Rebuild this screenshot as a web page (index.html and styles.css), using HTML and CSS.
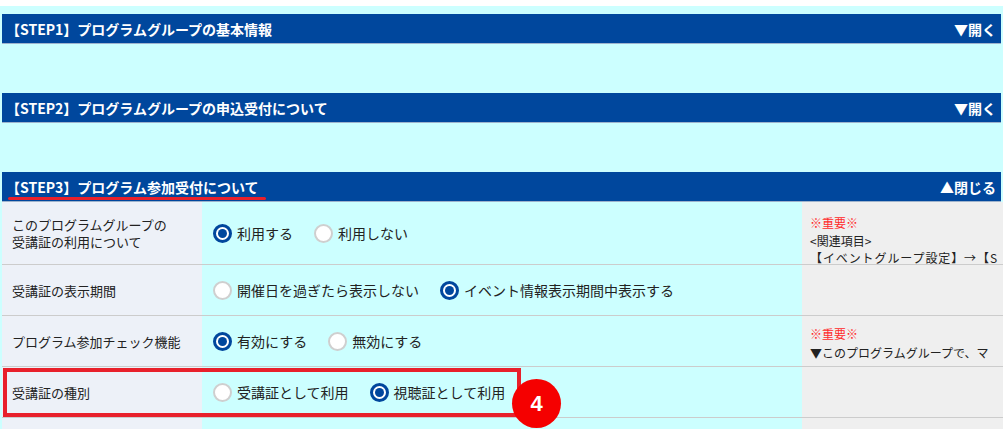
FILE: index.html
```html
<!DOCTYPE html>
<html lang="ja">
<head>
<meta charset="utf-8">
<title>プログラムグループ設定</title>
<link rel="stylesheet" href="styles.css">
</head>
<body>
<div class="page">
  <section class="step">
    <div class="step-head">
      <span class="step-title">【STEP1】プログラムグループの基本情報</span>
      <span class="step-toggle">▼開く</span>
    </div>
  </section>

  <section class="step">
    <div class="step-head">
      <span class="step-title">【STEP2】プログラムグループの申込受付について</span>
      <span class="step-toggle">▼開く</span>
    </div>
  </section>

  <section class="step">
    <div class="step-head">
      <span class="step-title">【STEP3】プログラム参加受付について</span>
      <span class="step-toggle">▲閉じる</span>
      <span class="mark-line"></span>
    </div>
    <div class="form-grid">
      <div class="cell label">このプログラムグループの<br>受講証の利用について</div>
      <div class="cell field">
        <label class="opt"><span class="radio on"></span>利用する</label>
        <label class="opt"><span class="radio"></span>利用しない</label>
      </div>
      <div class="cell note note-top">
        <div class="warn">※重要※</div>
        <div>&lt;関連項目&gt;</div>
        <div class="wide">【イベントグループ設定】→【S</div>
      </div>

      <div class="cell label">受講証の表示期間</div>
      <div class="cell field">
        <label class="opt"><span class="radio"></span>開催日を過ぎたら表示しない</label>
        <label class="opt"><span class="radio on"></span>イベント情報表示期間中表示する</label>
      </div>
      <div class="cell note"></div>

      <div class="cell label">プログラム参加チェック機能</div>
      <div class="cell field">
        <label class="opt"><span class="radio on"></span>有効にする</label>
        <label class="opt"><span class="radio"></span>無効にする</label>
      </div>
      <div class="cell note note-mid">
        <div class="warn">※重要※</div>
        <div>▼このプログラムグループで、マ</div>
      </div>

      <div class="cell label">受講証の種別</div>
      <div class="cell field">
        <label class="opt"><span class="radio"></span>受講証として利用</label>
        <label class="opt"><span class="radio on"></span>視聴証として利用</label>
      </div>
      <div class="cell note"></div>

      <div class="cell label last"></div>
      <div class="cell field last"></div>
      <div class="cell note last"></div>

      <div class="focus-box"></div>
      <div class="badge">4</div>
    </div>
  </section>
</div>
</body>
</html>
```

FILE: styles.css
```css
html, body {
  margin: 0;
  padding: 0;
  background: #ffffff;
  overflow: hidden;
}

body {
  font-family: "Noto Sans CJK JP", "Noto Sans", sans-serif;
  color: #333333;
}

.page {
  margin-top: 6px;
  min-height: 423px;
  background: #ccffff;
  padding: 8px 2px 0;
  box-sizing: border-box;
}

.step + .step {
  margin-top: 49px;
}

.step-head {
  position: relative;
  display: flex;
  justify-content: space-between;
  align-items: center;
  height: 29px;
  padding: 0 5px 0 4px;
  background: #00479d;
  border-bottom: 1px solid #9fb3cc;
  color: #ffffff;
  font-size: 14px;
  font-weight: bold;
}

.mark-line {
  position: absolute;
  left: 6px;
  top: 25px;
  width: 258px;
  height: 3px;
  border-radius: 2px;
  background: #e8202b;
}

.form-grid {
  position: relative;
  display: grid;
  grid-template-columns: 200px 600px 201px;
  grid-template-rows: 63px 51px 51px 51px 20px;
}

.cell {
  box-sizing: border-box;
  border-bottom: 1px solid #cccccc;
}

.cell.last {
  border-bottom: none;
}

.label {
  background: #edf1f8;
  padding: 0 10px;
  display: flex;
  align-items: center;
  font-size: 13px;
  line-height: 17px;
  color: #222222;
}

.field {
  background: #ccffff;
  padding: 0 11px;
  display: flex;
  align-items: center;
  gap: 21px;
  font-size: 14px;
  color: #222222;
}

.opt {
  display: flex;
  align-items: center;
  gap: 5px;
}

.radio {
  width: 19px;
  height: 19px;
  box-sizing: border-box;
  border-radius: 50%;
  border: 2px solid #cfcfcf;
  background: #ffffff;
  flex: none;
  display: flex;
  align-items: center;
  justify-content: center;
}

.radio.on {
  border: 3px solid #00479d;
}

.radio.on::after {
  content: "";
  width: 9px;
  height: 9px;
  border-radius: 50%;
  background: #00479d;
}

.note {
  background: #efefef;
  padding: 0 0 0 8px;
  font-size: 12px;
  line-height: 17.5px;
  white-space: nowrap;
  overflow: hidden;
  color: #222222;
}

.note .wide {
  letter-spacing: 0.9px;
}

.note-top {
  padding-top: 12px;
}

.note-mid {
  padding-top: 9px;
  line-height: 18.5px;
}

.warn {
  color: #ff2a2a;
}

.focus-box {
  position: absolute;
  left: 1px;
  top: 166px;
  width: 518px;
  height: 49px;
  box-sizing: border-box;
  border: 4px solid #e8202b;
}

.badge {
  position: absolute;
  left: 510px;
  top: 177px;
  width: 49px;
  height: 49px;
  border-radius: 50%;
  background: #f50000;
  color: #ffffff;
  display: flex;
  align-items: center;
  justify-content: center;
  font-family: "Liberation Sans", Arial, sans-serif;
  font-weight: bold;
  font-size: 22px;
}
```
